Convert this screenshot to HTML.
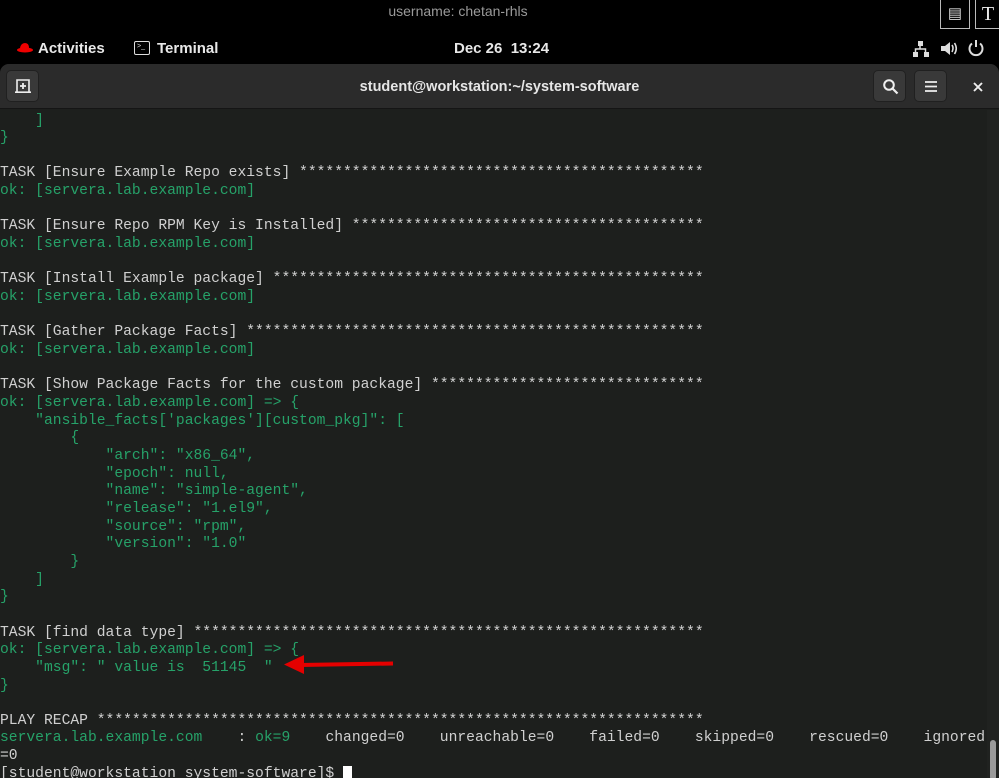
<!DOCTYPE html>
<html><head><meta charset="utf-8"><style>
*{margin:0;padding:0;box-sizing:border-box}
html,body{width:999px;height:778px;overflow:hidden;background:#000;font-family:"Liberation Sans",sans-serif}
#top{position:absolute;left:0;top:0;width:999px;height:66px;background:#000}
.user{position:absolute;left:0;width:916px;top:3px;text-align:center;color:#9a9a9a;font-size:14px}
.act{position:absolute;top:40px;color:#e8e8e8;font-size:15px;font-weight:bold}
#win{position:absolute;left:0;top:64px;width:999px;height:714px;background:#1d1f1d;border-radius:9px 9px 0 0;overflow:hidden}
#hb{position:absolute;left:0;top:0;width:999px;height:45px;background:#2b2b2b;border-bottom:1px solid #151515}
.btn{position:absolute;top:6px;width:33px;height:32px;background:#393939;border-radius:5px;border:1px solid #202020}
.title{position:absolute;left:0;width:999px;top:15px;text-align:center;color:#e6e6e6;font-size:14.5px;font-weight:bold}
#term{position:absolute;left:0;top:48.5px;font-family:"Liberation Mono",monospace;font-size:14.67px;line-height:17.65px;color:#d0d0d0;white-space:pre}
.g{color:#26a269}
#sb{position:absolute;left:987px;top:46px;width:12px;height:668px;background:#202220}
</style></head><body>
<div id="top">
<div class="user">username: chetan-rhls</div>
<div style="position:absolute;left:940px;top:0;width:30px;height:29px;border:1px solid #bbb;border-top:none;color:#ddd;font-size:15px;text-align:center;line-height:28px">&#9636;</div>
<div style="position:absolute;left:975px;top:0;width:26px;height:29px;border:1px solid #bbb;border-top:none;color:#eee;font-family:'Liberation Serif',serif;font-size:20px;text-align:center;line-height:28px">T</div>
<svg style="position:absolute;left:16px;top:42px" width="18" height="12" viewBox="0 0 18 12"><path d="M4 6 Q5 1 9 1 Q13 1 13 6 Z" fill="#e00"/><ellipse cx="9" cy="8" rx="8" ry="2.5" fill="#e00"/></svg>
<div class="act" style="left:38px">Activities</div>
<div style="position:absolute;left:134px;top:41px;width:16px;height:14px;border:1.5px solid #ddd;border-radius:2px;font-size:7px;color:#ddd;line-height:10px;padding-left:2px">&gt;_</div>
<div class="act" style="left:157px">Terminal</div>
<div class="act" style="left:454px">Dec 26&nbsp; 13:24</div>
<svg style="position:absolute;left:912px;top:40px" width="18" height="18" viewBox="0 0 18 18" fill="#ddd"><rect x="6" y="1" width="5" height="5"/><rect x="1" y="12" width="5" height="5"/><rect x="12" y="12" width="5" height="5"/><path d="M8 6v3M3.5 12V9h10v3" stroke="#ddd" stroke-width="1.5" fill="none"/></svg>
<svg style="position:absolute;left:940px;top:40px" width="18" height="17" viewBox="0 0 18 17"><path d="M1 6h4l5-4v13l-5-4H1z" fill="#ddd"/><path d="M12 5q2 3 0 7M14.5 3q3.5 5.5 0 11" stroke="#ddd" stroke-width="1.6" fill="none"/></svg>
<svg style="position:absolute;left:967px;top:39px" width="18" height="18" viewBox="0 0 18 18"><path d="M5 4.5A6.5 6.5 0 1 0 13 4.5" stroke="#ddd" stroke-width="2" fill="none"/><path d="M9 1v7" stroke="#ddd" stroke-width="2"/></svg>
</div>
<div id="win">
<div id="hb">
<div class="btn" style="left:6px"><svg style="position:absolute;left:8px;top:7px" width="16" height="16" viewBox="0 0 16 16"><path d="M2 14V2h12v12" stroke="#eee" stroke-width="1.6" fill="none"/><path d="M0 14.2h16" stroke="#eee" stroke-width="1.6"/><path d="M8 5v6M5 8h6" stroke="#eee" stroke-width="1.8"/></svg></div>
<div class="title">student@workstation:~/system-software</div>
<div class="btn" style="left:873px"><svg style="position:absolute;left:8px;top:7px" width="17" height="17" viewBox="0 0 17 17"><circle cx="7" cy="7" r="4.8" stroke="#eee" stroke-width="2" fill="none"/><path d="M10.5 10.5l5 5" stroke="#eee" stroke-width="2.2"/></svg></div>
<div class="btn" style="left:914px"><svg style="position:absolute;left:9px;top:9px" width="14" height="13" viewBox="0 0 14 13"><path d="M1 2h12M1 6.5h12M1 11h12" stroke="#eee" stroke-width="1.8"/></svg></div>
<svg style="position:absolute;left:973px;top:18px" width="10" height="10" viewBox="0 0 10 10"><path d="M1 1l8 8M9 1l-8 8" stroke="#eee" stroke-width="1.9"/></svg>
</div>
<div id="sb"><div style="position:absolute;left:3px;top:630px;width:6px;height:40px;background:#9a9a9a;border-radius:3px"></div></div>
<div id="term"><span class="g">    ]
}</span>

TASK [Ensure Example Repo exists] **********************************************
<span class="g">ok: [servera.lab.example.com]</span>

TASK [Ensure Repo RPM Key is Installed] ****************************************
<span class="g">ok: [servera.lab.example.com]</span>

TASK [Install Example package] *************************************************
<span class="g">ok: [servera.lab.example.com]</span>

TASK [Gather Package Facts] ****************************************************
<span class="g">ok: [servera.lab.example.com]</span>

TASK [Show Package Facts for the custom package] *******************************
<span class="g">ok: [servera.lab.example.com] =&gt; {
    "ansible_facts['packages'][custom_pkg]": [
        {
            "arch": "x86_64",
            "epoch": null,
            "name": "simple-agent",
            "release": "1.el9",
            "source": "rpm",
            "version": "1.0"
        }
    ]
}</span>

TASK [find data type] **********************************************************
<span class="g">ok: [servera.lab.example.com] =&gt; {
    "msg": " value is  51145  "
}</span>

PLAY RECAP *********************************************************************
<span class="g">servera.lab.example.com</span>    : <span class="g">ok=9</span>    changed=0    unreachable=0    failed=0    skipped=0    rescued=0    ignored
=0
[student@workstation system-software]$ <span style="background:#fff"> </span></div>
</div>
<svg style="position:absolute;left:280px;top:652px" width="120" height="24" viewBox="0 0 120 24"><path d="M113 11.5L20 13" stroke="#e50000" stroke-width="4"/><path d="M4 12.5L24 3L24 22Z" fill="#e50000"/></svg>
</body></html>
